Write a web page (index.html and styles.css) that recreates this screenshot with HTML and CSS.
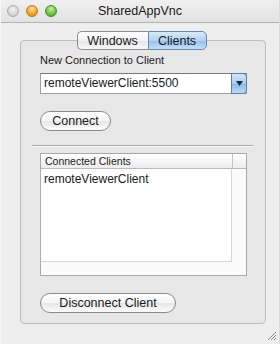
FILE: index.html
```html
<!DOCTYPE html>
<html lang="en">
<head>
<meta charset="UTF-8">
<title>SharedAppVnc</title>
<link rel="stylesheet" href="styles.css">
</head>
<body>

<div class="window">
    <div class="titlebar">
        <div class="lights">
            <span class="light light-close"></span>
            <span class="light light-min"></span>
            <span class="light light-max"></span>
        </div>
        <div class="title">SharedAppVnc</div>
    </div>

    <div class="tabs">
        <span class="tab tab-left">Windows</span>
        <span class="tab tab-right selected">Clients</span>
    </div>

    <div class="tab-box">
        <div class="field-label">New Connection to Client</div>
        <div class="combo">
            <span class="combo-text">remoteViewerClient:5500</span>
            <span class="combo-arrow">
                <svg width="7" height="5" viewBox="0 0 7 5"><path d="M0 0 L7 0 L3.5 5 Z" fill="#1c2a3a"/></svg>
            </span>
        </div>

        <div class="btn btn-connect">Connect</div>

        <div class="separator"></div>

        <div class="table">
            <div class="table-head">
                <span class="head-cell">Connected Clients</span>
                <span class="head-corner"></span>
            </div>
            <div class="table-body">
                <div class="rows">
                    <div class="row">remoteViewerClient</div>
                </div>
                <div class="vscroll"></div>
                <div class="hscroll"></div>
                <div class="scroll-corner"></div>
            </div>
        </div>

        <div class="btn btn-disconnect">Disconnect Client</div>
    </div>

    <div class="footer">
        <svg class="grip" width="10" height="10" viewBox="0 0 10 10">
            <path d="M1 9 L9 1 M4 9 L9 4 M7 9 L9 7" stroke="#8a8a8a" stroke-width="1" fill="none"/>
        </svg>
    </div>
</div>

</body>
</html>
```

FILE: styles.css
```css
body {
    margin: 0;
    font-family: "Liberation Sans", Arial, sans-serif;
    color: #1a1a1a;
}
.window {
    width: 280px;
    height: 344px;
    background-color: #eeeeee;
    box-sizing: border-box;
    border-left: 1px solid #f6f6f6;
    border-right: 1px solid #dcdcdc;
}
.titlebar {
    height: 22px;
    border-bottom: 1px solid #b2b2b2;
    background: linear-gradient(#f0f0f0, #e2e2e2);
    display: flex;
    align-items: center;
    position: relative;
}
.lights {
    display: flex;
    gap: 7px;
    padding-left: 6px;
}
.light {
    width: 12px;
    height: 12px;
    border-radius: 50%;
    box-sizing: border-box;
}
.light-close {
    background: radial-gradient(circle at 50% 35%, #f4f4f4, #c4c4c4);
    border: 1px solid #a8a8a8;
}
.light-min {
    background: radial-gradient(circle at 50% 30%, #ffe0a0, #f0a020 60%, #d88a10);
    border: 1px solid #b87a20;
}
.light-max {
    background: radial-gradient(circle at 50% 30%, #c8f0a0, #6cc040 60%, #4a9a28);
    border: 1px solid #4a8a30;
}
.title {
    position: absolute;
    left: 0;
    right: 0;
    text-align: center;
    font-size: 12.5px;
    pointer-events: none;
}
.tabs {
    display: flex;
    justify-content: center;
    margin-top: 8px;
    margin-bottom: -10px;
    padding-left: 3px;
    position: relative;
    z-index: 1;
}
.tab {
    height: 19px;
    line-height: 18px;
    box-sizing: border-box;
    font-size: 12.5px;
    text-align: center;
    border: 1px solid #8e8e8e;
}
.tab-left {
    width: 71px;
    border-radius: 5px 0 0 5px;
    border-right: none;
    background: linear-gradient(#ffffff, #f2f2f2 50%, #e4e4e4 51%, #f8f8f8);
}
.tab-right {
    width: 59px;
    border-radius: 0 5px 5px 0;
}
.selected {
    border-color: #6b87ab;
    background: linear-gradient(#d8e9fa, #b4d2f2 50%, #93bdea 51%, #c6e0fa);
}
.tab-box {
    margin-left: 19px;
    width: 246px;
    height: 284px;
    box-sizing: border-box;
    border: 1px solid #bdbdbd;
    border-radius: 4px;
    background-color: #e7e7e7;
    padding: 13px 18px 0 19px;
}
.field-label {
    font-size: 11px;
    line-height: 13px;
    height: 13px;
}
.combo {
    margin-top: 6px;
    height: 21px;
    display: flex;
    box-sizing: border-box;
    background: #fff;
    border: 1px solid #a0a0a0;
    border-top-color: #7a7a7a;
}
.combo-text {
    flex: 1;
    font-size: 12px;
    line-height: 19px;
    padding-left: 3px;
}
.combo-arrow {
    width: 14px;
    margin: -1px -1px -1px 0;
    border: 1px solid #5e7fa8;
    border-radius: 0 4px 4px 0;
    background: linear-gradient(#d4e6f8, #a8ccf0 50%, #86b6ea 51%, #bcdcfa);
    display: flex;
    align-items: center;
    justify-content: center;
}
.btn {
    height: 20px;
    box-sizing: border-box;
    border: 1px solid #8a8a8a;
    border-radius: 10px;
    background: linear-gradient(#ffffff, #f4f4f4 50%, #e6e6e6 51%, #fbfbfb);
    font-size: 12.5px;
    line-height: 18px;
    text-align: center;
}
.btn-connect {
    margin-top: 17px;
    width: 71px;
}
.btn-disconnect {
    margin-top: 17px;
    width: 136px;
}
.separator {
    margin: 14px -6px 0 -8px;
    height: 1px;
    background-color: #a8a8a8;
    border-bottom: 1px solid #f8f8f8;
}
.table {
    margin-top: 6px;
    height: 123px;
    box-sizing: border-box;
    border: 1px solid #a8a8a8;
    background: #fafafa;
    display: flex;
    flex-direction: column;
}
.table-head {
    height: 14px;
    display: flex;
    background: linear-gradient(#ffffff, #ececec);
    border-bottom: 1px solid #b8b8b8;
}
.head-cell {
    flex: 1;
    font-size: 10.5px;
    line-height: 14px;
    padding-left: 4px;
    border-right: 1px solid #c4c4c4;
}
.head-corner {
    width: 13px;
}
.table-body {
    flex: 1;
    display: grid;
    grid-template-columns: 1fr 14px;
    grid-template-rows: 1fr 13px;
}
.rows {
    background: #ffffff;
    border-right: 1px solid #d6d6d6;
    border-bottom: 1px solid #d6d6d6;
    box-shadow: 1px 1px 2px #e4e4e4;
}
.row {
    font-size: 12px;
    line-height: 16px;
    padding-left: 3px;
    padding-top: 2px;
}
.vscroll,
.hscroll,
.scroll-corner {
    background: #fbfbfb;
}
.footer {
    height: 19px;
    display: flex;
    justify-content: flex-end;
    align-items: flex-end;
    padding-right: 2px;
}
.grip {
    margin-bottom: 2px;
}
```
